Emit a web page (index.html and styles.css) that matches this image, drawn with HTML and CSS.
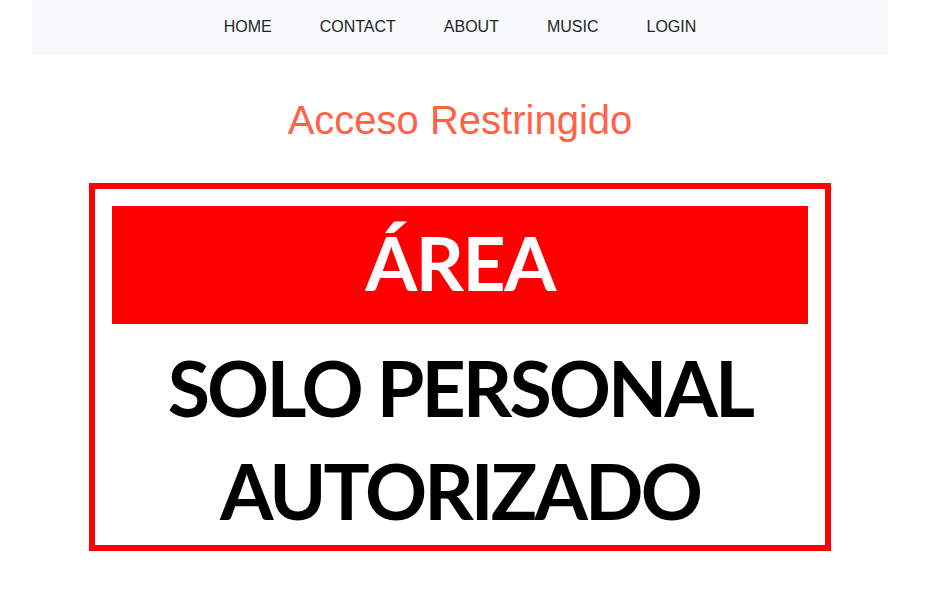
FILE: index.html
```html
<!DOCTYPE html>
<html lang="es">
<head>
<meta charset="utf-8">
<title>Acceso Restringido</title>
<link rel="stylesheet" href="styles.css">
</head>
<body>
<div class="page">
  <nav class="nav">
    <a class="nav-link" href="#">HOME</a>
    <a class="nav-link" href="#">CONTACT</a>
    <a class="nav-link" href="#">ABOUT</a>
    <a class="nav-link" href="#">MUSIC</a>
    <a class="nav-link" href="#">LOGIN</a>
  </nav>
  <h1 class="title">Acceso Restringido</h1>
  <div class="sign">
    <div class="banner">ÁREA</div>
    <div class="sign-text">
      <div class="line">SOLO PERSONAL</div>
      <div class="line">AUTORIZADO</div>
    </div>
  </div>
</div>
</body>
</html>
```

FILE: styles.css
```css
html, body {
  margin: 0;
  padding: 0;
  background: #ffffff;
}
body {
  font-family: "Liberation Sans", Arial, sans-serif;
}
.page {
  width: 856px;
  margin-left: 32px;
}
.nav {
  height: 55px;
  box-sizing: border-box;
  padding-bottom: 2px;
  background: #f8f9fa;
  display: flex;
  justify-content: center;
  align-items: center;
}
.nav-link {
  padding: 0 24px;
  font-size: 16px;
  color: #212529;
  text-decoration: none;
}
.title {
  margin: 42px 0 40px;
  text-align: center;
  font-size: 40px;
  font-weight: 400;
  line-height: 46px;
  color: #ff6347;
}
.sign {
  width: 742px;
  height: 368px;
  box-sizing: border-box;
  margin: 0 auto;
  border: 6px solid #ff0000;
  padding: 17px;
  background: #fff;
  display: flex;
  flex-direction: column;
}
.banner {
  flex: none;
  height: 118px;
  box-sizing: border-box;
  padding-bottom: 6px;
  background: #ff0000;
  color: #ffffff;
  display: flex;
  align-items: center;
  justify-content: center;
  font-family: Lato, "Open Sans", sans-serif;
  font-weight: 700;
  font-size: 75px;
  letter-spacing: -1.5px;
  line-height: 1;
}
.sign-text {
  flex: none;
  padding-top: 12px;
  display: flex;
  flex-direction: column;
  align-items: center;
  font-family: Lato, "Open Sans", sans-serif;
  font-weight: 700;
  font-size: 77px;
  letter-spacing: -2.9px;
  line-height: 103px;
  color: #000;
}
.line {
  height: 103px;
  white-space: nowrap;
}
```
